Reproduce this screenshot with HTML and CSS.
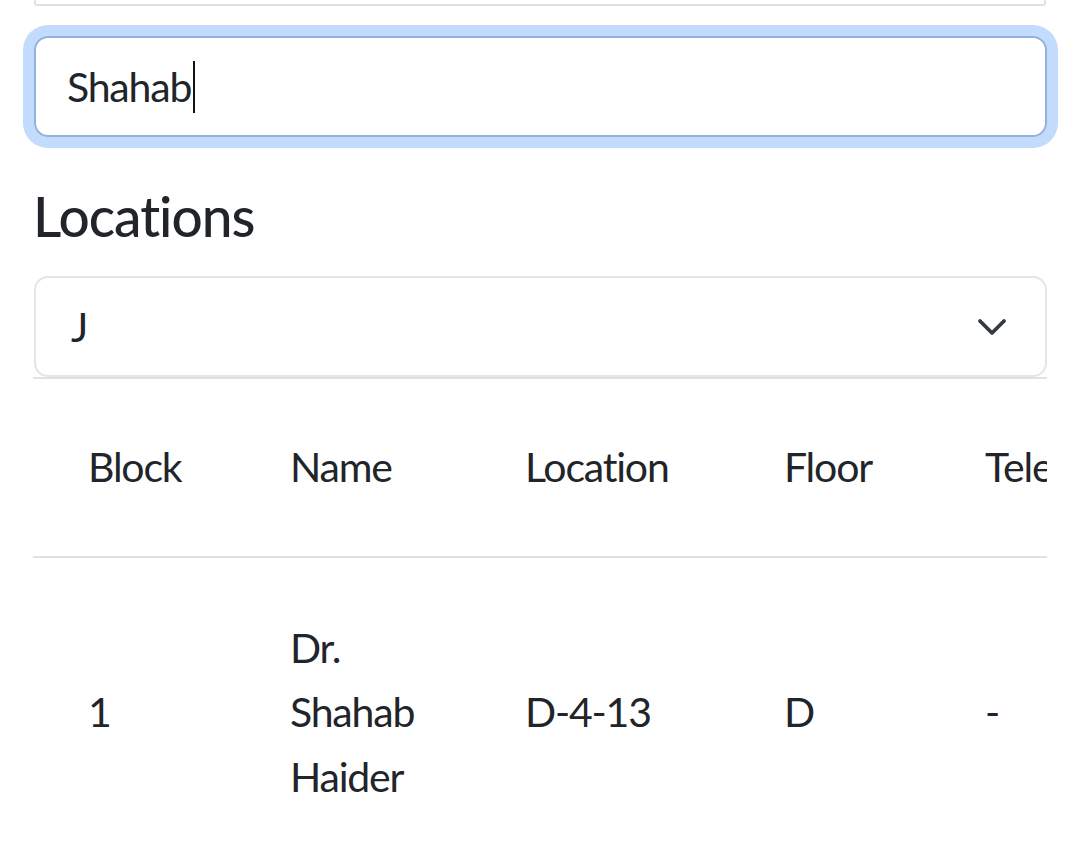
FILE: index.html
```html
<!DOCTYPE html>
<html lang="en">
<head>
<meta charset="utf-8">
<title>Locations</title>
<link rel="stylesheet" href="styles.css">
</head>
<body>
<div class="page">
  <div class="prev-field"></div>
  <div class="search">
    <span class="search-text">Shahab</span><span class="caret"></span>
  </div>
  <h5 class="title">Locations</h5>
  <div class="select">
    <span class="select-value">J</span>
    <svg class="chevron" width="32" height="20" viewBox="0 0 32 20" aria-hidden="true">
      <path d="M4 3 L16 15 L28 3" fill="none" stroke="#343a40" stroke-width="3.8" stroke-linecap="round" stroke-linejoin="round"/>
    </svg>
  </div>
  <div class="table-wrap">
    <table class="loc-table">
      <colgroup>
        <col class="c-block"><col class="c-name"><col class="c-loc"><col class="c-floor"><col class="c-tel">
      </colgroup>
      <thead>
        <tr><th>Block</th><th>Name</th><th>Location</th><th>Floor</th><th>Telephone</th></tr>
      </thead>
      <tbody>
        <tr><td>1</td><td>Dr. Shahab Haider</td><td>D-4-13</td><td>D</td><td>-</td></tr>
      </tbody>
    </table>
  </div>
</div>
</body>
</html>
```
FILE: styles.css
```css
* { box-sizing: border-box; }
html, body { margin: 0; padding: 0; background: #fff; }
body {
  font-family: Lato, "DejaVu Sans Condensed", "Liberation Sans", sans-serif;
  color: #212529;
  width: 1080px;
  height: 862px;
  overflow: hidden;
  letter-spacing: -1.2px;
}
.page {
  padding: 0 33px;
}
.prev-field {
  height: 6px;
  border: 2px solid #dee2e6;
  border-top: none;
  border-radius: 0 0 3px 3px;
  margin: 0 1px;
}
.search {
  margin-top: 30px;
  height: 101px;
  border: 2px solid #8fb2de;
  border-radius: 14px;
  box-shadow: 0 0 0 11px #c3dbfc;
  display: flex;
  align-items: center;
  padding-left: 31px;
  font-size: 41px;
  margin-left: 1px;
}
.search-text { line-height: 1; }
.caret {
  display: inline-block;
  width: 2px;
  height: 52px;
  background: #111;
  margin-left: 2px;
}
.title {
  font-size: 55px;
  font-weight: 500;
  line-height: 66px;
  margin: 46px 0 0 0;
  letter-spacing: -1px;
}
.select {
  margin-top: 27px;
  height: 101px;
  border: 2px solid #e3e5e8;
  border-radius: 14px;
  display: flex;
  align-items: center;
  justify-content: space-between;
  padding: 0 37px 0 35px;
  font-size: 41px;
  margin-left: 1px;
}
.chevron { display: block; margin-top: 2px; }
.table-wrap {
  border-top: 2px solid #dee2e6;
  overflow: hidden;
  margin-top: 0;
}
.loc-table {
  table-layout: fixed;
  border-collapse: collapse;
  width: 1150px;
  font-size: 41px;
}
.c-block { width: 202px; }
.c-name { width: 235px; }
.c-loc { width: 259px; }
.c-floor { width: 201px; }
.c-tel { width: 253px; }
.loc-table th,
.loc-table td {
  text-align: left;
  font-weight: 400;
  line-height: 64.5px;
  padding: 56px 20px 56px 55px;
  vertical-align: middle;
  white-space: normal;
}
.loc-table thead th {
  border-bottom: 2px solid #dee2e6;
  white-space: nowrap;
}
.loc-table td {
  padding-top: 58px;
  padding-bottom: 58px;
}
.loc-table td:nth-child(2) {
  padding-right: 57px;
}
```
